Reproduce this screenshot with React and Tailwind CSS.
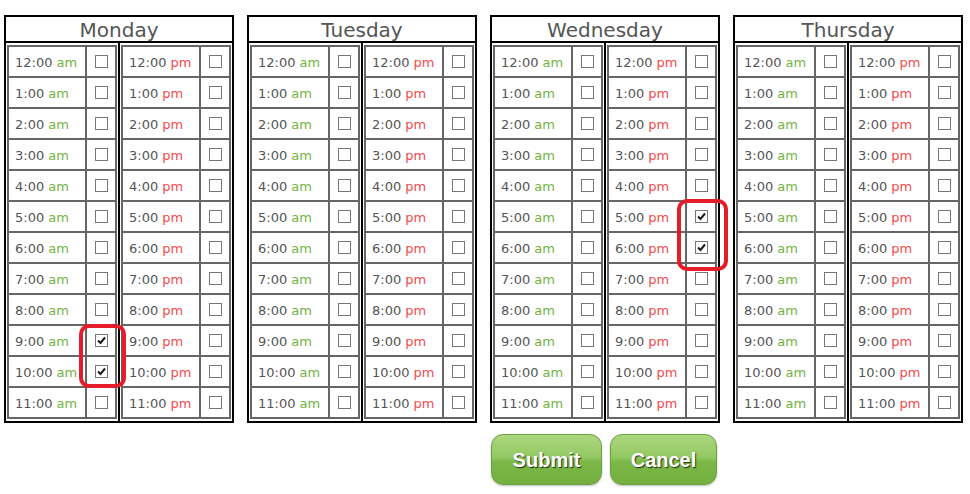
import React from 'react';

const DAYS = ['Monday', 'Tuesday', 'Wednesday', 'Thursday'];
const HOURS = ['12', '1', '2', '3', '4', '5', '6', '7', '8', '9', '10', '11'];

// which boxes are ticked, by day -> half -> hour index
const CHECKED = {
  Monday: { am: [9, 10], pm: [] },
  Wednesday: { am: [], pm: [5, 6] },
};

const Box = ({ checked }) => (
  <span className="flex h-[13px] w-[13px] items-center justify-center border border-[#777] bg-white">
    {checked && (
      <svg width="11" height="11" viewBox="0 0 11 11">
        <path d="M2 5.5 L4.5 8 L9 2.5" fill="none" stroke="#1a1a1a" strokeWidth="2" />
      </svg>
    )}
  </span>
);

const HalfTable = ({ half, ticks }) => (
  <div className="flex flex-col border-2 border-[#666]">
    {HOURS.map((h, i) => (
      <div key={h} className={`flex h-[29px] ${i > 0 ? 'box-content border-t-2 border-[#666]' : ''}`}>
        <div className="flex w-[76px] items-center pl-[6px] pt-[3px] text-[13px] text-[#555]">
          {h}:00&nbsp;
          <span className={half === 'am' ? 'text-[#72b43f]' : 'text-[#f4494c]'}>{half}</span>
        </div>
        <div className="flex w-[30px] items-center justify-center border-l-2 border-[#666]">
          <Box checked={ticks.includes(i)} />
        </div>
      </div>
    ))}
  </div>
);

const DayCard = ({ day, children }) => {
  const ticks = CHECKED[day] || { am: [], pm: [] };
  return (
    <div className="relative flex w-[230px] flex-col border-2 border-black">
      <div className="flex h-[26px] items-center justify-center border-b-2 border-black pt-[2px] text-[20px] text-[#555]">
        {day}
      </div>
      <div className="flex">
        <div className="px-px py-[2px] border-r-2 border-black">
          <HalfTable half="am" ticks={ticks.am} />
        </div>
        <div className="px-px py-[2px]">
          <HalfTable half="pm" ticks={ticks.pm} />
        </div>
      </div>
      {children}
    </div>
  );
};

const GreenButton = ({ label, width }) => (
  <button
    className={`${width} h-[51px] rounded-[12px] border border-[#6c9f3f] bg-[linear-gradient(to_bottom,#acd67f_0%,#93c963_45%,#7bb746_55%,#73b03f_100%)] font-['Liberation_Sans',Arial,sans-serif] text-[20px] font-bold text-white shadow-[0_1px_2px_rgba(0,0,0,0.25)] [text-shadow:1px_1px_1px_rgba(0,0,0,0.75)]`}
  >
    {label}
  </button>
);

export default function App() {
  return (
    <div className="min-h-[494px] w-[970px] bg-white pl-[4px] pt-[15px] font-['DejaVu_Sans',Verdana,sans-serif]">
      <div className="flex gap-[13px]">
        {DAYS.map((day) => (
          <DayCard key={day} day={day}>
            {day === 'Monday' && (
              <div className="absolute left-[73px] top-[307px] h-[64px] w-[47px] rounded-[10px] border-4 border-[#e51d2a]" />
            )}
            {day === 'Wednesday' && (
              <div className="absolute left-[185px] top-[182px] h-[72px] w-[51px] rounded-[10px] border-4 border-[#e51d2a]" />
            )}
          </DayCard>
        ))}
      </div>
      <div className="mt-[11px] flex gap-[8px] pl-[487px]">
        <GreenButton label="Submit" width="w-[111px]" />
        <GreenButton label="Cancel" width="w-[107px]" />
      </div>
    </div>
  );
}
